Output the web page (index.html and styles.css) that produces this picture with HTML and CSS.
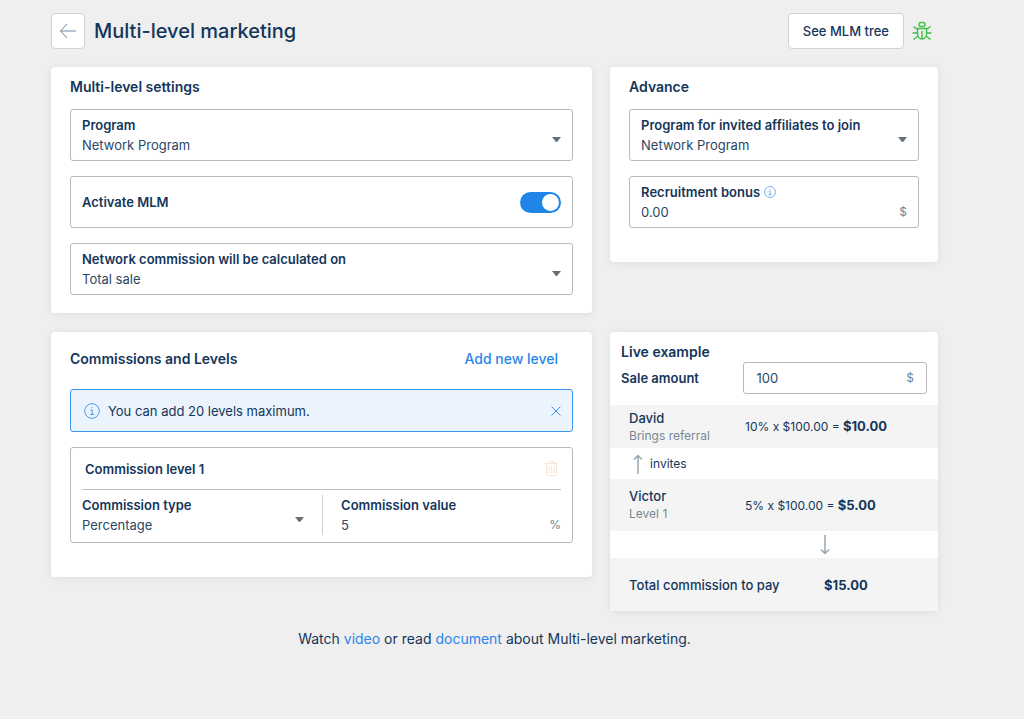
FILE: index.html
```html
<!DOCTYPE html>
<html lang="en">
  <head>
    <meta charset="utf-8">
    <title>Multi-level marketing</title>
    <link rel="stylesheet" href="styles.css">
  </head>
  <body>
    <header class="header">
      <button class="back" type="button" aria-label="Back">
        <svg width="18" height="16" viewBox="0 0 18 16"><path d="M17 8H1.500M8 1L1.500 8L8 15"/></svg>
      </button>
      <h1>Multi-level marketing</h1>
      <button class="tree" type="button">See MLM tree</button>
      <button class="bug" type="button" aria-label="Report a bug">
        <svg width="20" height="20" viewBox="0 0 20 20">
          <rect x="7" y="1.500" width="6" height="4" rx="2"/>
          <path d="M5.500 7.500H14.500V13C14.500 16 12.500 18 10 18S5.500 16 5.500 13ZM10 10V18M5.500 8.500L1.500 5.500M14.500 8.500L18.500 5.500M5.500 12H.500M14.500 12H19.500M6 15L1.500 18.500M14 15L18.500 18.500"/>
        </svg>
      </button>
    </header>

    <main class="grid">
      <section class="card">
        <h2>Multi-level settings</h2>
        <div class="fields">
          <div class="field">
            <label for="program">Program</label>
            <select id="program"><option>Network Program</option></select>
            <svg class="caret" width="9" height="5" viewBox="0 0 9 5"><path d="M0 0H9L5 5H4Z"/></svg>
          </div>
          <div class="field switch-field">
            <label for="active">Activate MLM</label>
            <input class="switch" type="checkbox" id="active" checked>
          </div>
          <div class="field">
            <label for="base">Network commission will be calculated on</label>
            <select id="base"><option>Total sale</option></select>
            <svg class="caret" width="9" height="5" viewBox="0 0 9 5"><path d="M0 0H9L5 5H4Z"/></svg>
          </div>
        </div>
      </section>

      <section class="card advance">
        <h2>Advance</h2>
        <div class="fields">
          <div class="field">
            <label for="invited">Program for invited affiliates to join</label>
            <select id="invited"><option>Network Program</option></select>
            <svg class="caret" width="9" height="5" viewBox="0 0 9 5"><path d="M0 0H9L5 5H4Z"/></svg>
          </div>
          <div class="field">
            <label for="bonus">Recruitment bonus
              <svg class="info" width="12" height="12" viewBox="0 0 16 16"><circle cx="8" cy="8" r="7.300"/><path d="M6.500 7H8.200V11.500M6.200 11.500H10M8 4V5.300"/></svg>
            </label>
            <input type="text" id="bonus" value="0.00">
            <span class="unit">$</span>
          </div>
        </div>
      </section>

      <section class="card levels">
        <div class="levels-head">
          <h2>Commissions and Levels</h2>
          <a href="#">Add new level</a>
        </div>
        <div class="alert">
          <svg class="info" width="16" height="16" viewBox="0 0 16 16"><circle cx="8" cy="8" r="7.300"/><path d="M6.500 7H8.200V11.500M6.200 11.500H10M8 4V5.300"/></svg>
          <span>You can add 20 levels maximum.</span>
          <button type="button" aria-label="Close">
            <svg width="10" height="10" viewBox="0 0 10 10"><path d="M.500 .500L9.500 9.500M9.500 .500L.500 9.500"/></svg>
          </button>
        </div>
        <div class="level">
          <div class="level-head">
            <h3>Commission level 1</h3>
            <button type="button" aria-label="Delete level" disabled>
              <svg width="13" height="15" viewBox="0 0 13 15"><path d="M0 2.500H13M4 2.500V.500H9V2.500M1.500 2.500V13.500Q1.500 14.500 2.500 14.500H10.500Q11.500 14.500 11.500 13.500V2.500M4 5V12M6.500 5V12M9 5V12"/></svg>
            </button>
          </div>
          <div class="level-body">
            <div class="cell">
              <label for="type">Commission type</label>
              <select id="type"><option>Percentage</option></select>
              <svg class="caret" width="9" height="5" viewBox="0 0 9 5"><path d="M0 0H9L5 5H4Z"/></svg>
            </div>
            <div class="cell">
              <label for="value">Commission value</label>
              <input type="text" id="value" value="5">
              <span class="unit">%</span>
            </div>
          </div>
        </div>
      </section>

      <section class="card live">
        <h2>Live example</h2>
        <div class="sale">
          <label for="sale">Sale amount</label>
          <div class="sale-box">
            <input type="text" id="sale" value="100">
            <span class="unit">$</span>
          </div>
        </div>
        <div class="person">
          <div><b>David</b><small>Brings referral</small></div>
          <p>10% x $100.00 = <strong>$10.00</strong></p>
        </div>
        <div class="invites">
          <svg class="arrow" width="10" height="20" viewBox="0 0 10 20"><path d="M5 20V1.500M1 5.500L5 1.500L9 5.500"/></svg>
          invites
        </div>
        <div class="person victor">
          <div><b>Victor</b><small>Level 1</small></div>
          <p>5% x $100.00 = <strong>$5.00</strong></p>
        </div>
        <div class="down">
          <svg class="arrow" width="10" height="20" viewBox="0 0 10 20"><path d="M5 0V18.500M1 14.500L5 18.500L9 14.500"/></svg>
        </div>
        <div class="total">
          <span>Total commission to pay</span>
          <strong>$15.00</strong>
        </div>
      </section>
    </main>

    <footer>Watch <a href="#">video</a> or read <a href="#">document</a> about Multi-level marketing.</footer>
  </body>
</html>
```
FILE: styles.css
```css
* {
  box-sizing: border-box;
}
body {
  margin: 0;
  padding: 13px 86px 12px 51px;
  background-color: #efefef;
  color: #14365a;
  font-family: Inter, sans-serif;
  font-size: 13px;
  line-height: 20px;
}
h1, h2, h3, p {
  margin: 0;
}
h1 {
  flex: 1;
  font-size: 20px;
  font-weight: 500;
}
h2 {
  font-size: 14px;
  font-weight: 600;
}
h3 {
  font-size: 13px;
  font-weight: 600;
}
a {
  color: #2a86e8;
  text-decoration: none;
}
button {
  padding: 0;
  border: none;
  background: none;
  color: inherit;
  font: inherit;
  cursor: pointer;
}
svg {
  display: block;
  fill: none;
  stroke: currentColor;
}

/* header */
.header {
  display: flex;
  align-items: center;
  margin-bottom: 18px;
}
.back, .tree {
  height: 36px;
  border: 1px solid #d2d2d2;
  border-radius: 4px;
  background-color: white;
}
.back {
  display: flex;
  align-items: center;
  justify-content: center;
  width: 34px;
  margin-right: 9px;
  color: #7088a0;
}
.tree {
  padding: 0 14px;
  font-weight: 500;
}
.bug {
  margin: 0 6px 0 8px;
  color: #3fbf48;
  stroke-width: 1.4;
}

/* cards */
.grid {
  display: grid;
  grid-template-columns: 33fr 20fr;
  align-items: start;
  gap: 19px 18px;
}
.card {
  padding: 10px 19px 18px;
  border-radius: 4px;
  background-color: white;
  box-shadow: 0 1px 8px rgba(0, 0, 0, 0.08);
}
.advance {
  padding-bottom: 34px;
}
.fields {
  display: flex;
  flex-direction: column;
  gap: 15px;
  margin-top: 12px;
}
.field, .cell {
  display: grid;
  grid-template-columns: 1fr;
  grid-template-rows: 20px 20px;
}
.field {
  padding: 5px 11px;
  border: 1px solid #bababa;
  border-radius: 3px;
}
label {
  display: flex;
  align-items: center;
  gap: 4px;
  font-size: 13px;
  font-weight: 600;
}
select, input[type="text"] {
  grid-area: 2 / 1;
  width: 100%;
  min-width: 0;
  padding: 0;
  border: none;
  outline: none;
  appearance: none;
  background: none;
  color: #2a4866;
  font: inherit;
  font-size: 13px;
}
.caret, .unit {
  grid-area: 2 / 1;
  justify-self: end;
  pointer-events: none;
}
.caret {
  margin-top: 2px;
  fill: #66707a;
  stroke: none;
}
.unit {
  color: #6d8799;
  font-size: 12px;
}
.info {
  color: #4a97ee;
}
.switch-field {
  grid-template-columns: 1fr auto;
  grid-template-rows: 40px;
  align-items: center;
}
.switch {
  display: flex;
  justify-content: flex-end;
  width: 41px;
  height: 21px;
  margin: 0;
  padding: 2px;
  border-radius: 11px;
  appearance: none;
  background-color: #1f86e8;
}
.switch::before {
  content: "";
  width: 17px;
  height: 17px;
  border-radius: 50%;
  background-color: white;
}
.switch:not(:checked) {
  justify-content: flex-start;
  background-color: #bababa;
}

/* commissions */
.levels {
  padding: 17px 19px 34px;
}
.levels-head {
  display: flex;
  justify-content: space-between;
  margin-bottom: 20px;
  padding-right: 15px;
}
.levels-head a {
  font-size: 14px;
  font-weight: 500;
}
.alert {
  display: flex;
  align-items: center;
  gap: 8px;
  height: 43px;
  margin-bottom: 15px;
  padding: 0 11px 0 13px;
  border: 1px solid #3b97ee;
  border-radius: 3px;
  background-color: #ebf4fc;
}
.alert span {
  flex: 1;
}
.alert button {
  color: #3b97ee;
}
.level {
  padding: 0 11px;
  border: 1px solid #bababa;
  border-radius: 3px;
}
.level-head {
  display: flex;
  align-items: center;
  justify-content: space-between;
  height: 42px;
  padding: 0 3px;
  border-bottom: 1px solid #bbc1c8;
}
.level-head button {
  color: #f6e6d6;
}
.level-body {
  display: grid;
  grid-template-columns: 1fr 220px;
  gap: 18px;
  padding: 5px 0 7px;
}
.cell:first-child {
  padding-right: 18px;
  border-right: 1px solid #d0d0d0;
}

/* live example */
.live {
  padding: 10px 0 0;
}
.live h2, .sale {
  padding: 0 11px;
}
.sale {
  display: grid;
  grid-template-columns: 2fr 3fr;
  margin-bottom: 11px;
}
.sale-box {
  display: flex;
  align-items: center;
  height: 32px;
  padding: 0 12px;
  border: 1px solid #bababa;
  border-radius: 3px;
}
.person {
  display: grid;
  grid-template-columns: 2fr 3fr;
  align-items: center;
  height: 43px;
  padding: 0 19px;
  background-color: #f4f4f4;
}
.person b, .person small {
  display: block;
  line-height: 18px;
}
.person b {
  font-size: 13px;
  font-weight: 500;
}
.person small {
  color: #778891;
  font-size: 12px;
}
.person p {
  font-size: 12px;
}
strong {
  font-size: 13px;
  font-weight: 700;
}
.victor {
  height: 52px;
}
.arrow {
  color: #96a5b0;
  stroke-width: 1.5;
}
.invites {
  display: flex;
  align-items: center;
  gap: 7px;
  height: 31px;
  padding: 0 23px;
  font-size: 12px;
}
.down {
  display: grid;
  align-items: center;
  height: 27px;
  padding-left: 64%;
}
.total {
  display: grid;
  grid-template-columns: 195px 1fr;
  align-items: center;
  height: 53px;
  padding: 0 19px;
  background-color: #f4f4f4;
}
.total span {
  font-weight: 500;
}
footer {
  margin: 18px 0 0;
  font-size: 14px;
  text-align: center;
}
```
